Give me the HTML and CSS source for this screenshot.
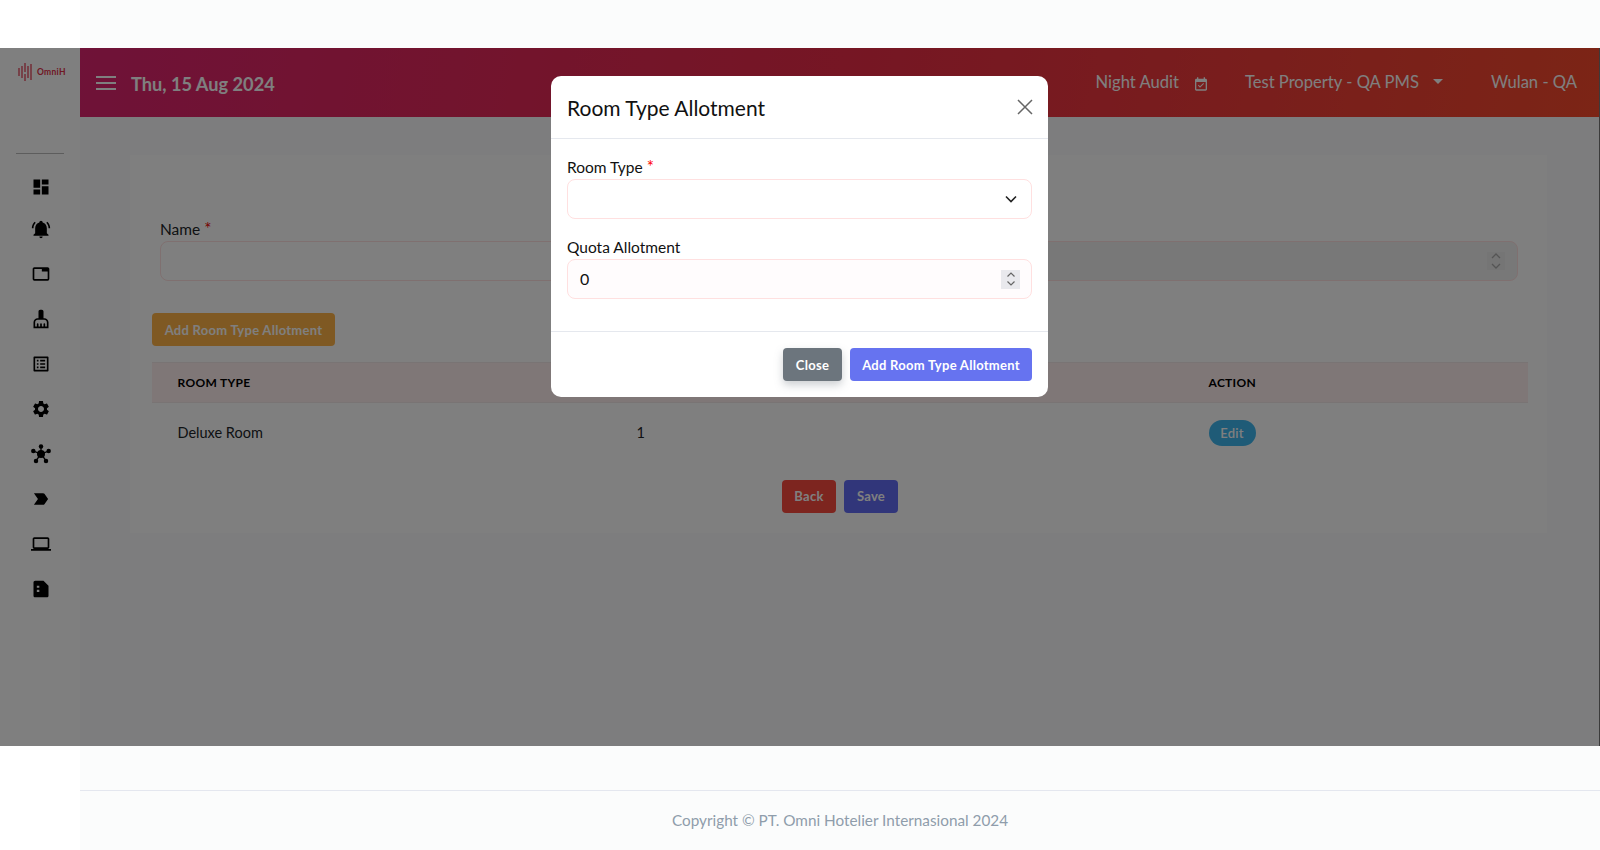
FILE: index.html
```html
<!DOCTYPE html>
<html lang="en">
<head>
  <meta charset="UTF-8" />
  <meta name="viewport" content="width=device-width, initial-scale=1.0" />
  <title>Room Type Allotment</title>
  <link rel="stylesheet" href="styles.css">
</head>
<body>
  <div class="top-strip"></div>

  <div class="stage">
    <aside class="sidebar">
      <div class="logo">
        <svg class="logo-mark" viewBox="0 0 16 18" width="16" height="18">
          <path d="M1 5v8M4 3v12M7 0v9M7 11v7M10 3v12M13 1v16" />
        </svg>
        <span class="logo-text">OmniH</span>
      </div>
      <div class="side-divider"></div>
      <nav class="side-nav">
        <a href="#"><svg viewBox="0 0 24 24"><path d="M13 3v6h8V3M13 21h8V11h-8M3 21h8v-6H3M3 13h8V3H3v10z" /></svg></a>
        <a href="#"><svg viewBox="0 0 24 24"><path d="M21 19v1H3v-1l2-2v-6c0-3.100 2.030-5.830 5-6.710V4a2 2 0 0 1 4 0v.29c2.970.88 5 3.610 5 6.710v6l2 2M14 21a2 2 0 0 1-4 0M19.750 3.190l-1.420 1.420C20.040 6.300 21 8.600 21 11h2c0-2.930-1.160-5.750-3.250-7.810M1 11h2c0-2.400.96-4.700 2.670-6.390L4.250 3.190C2.160 5.250 1 8.070 1 11z" /></svg></a>
        <a href="#"><svg viewBox="0 0 24 24"><path d="M20 18H4V6h9v3h7M20 4H4C2.900 4 2 4.900 2 6v12a2 2 0 0 0 2 2h16a2 2 0 0 0 2-2V6c0-1.100-.9-2-2-2z" /></svg></a>
        <a href="#"><svg viewBox="0 0 24 24"><path d="M16 11h-1V3c0-1.100-.9-2-2-2h-2c-1.100 0-2 .9-2 2v8H8c-2.760 0-5 2.240-5 5v7h18v-7c0-2.760-2.240-5-5-5zm3 10h-2v-3c0-.55-.45-1-1-1s-1 .45-1 1v3h-2v-3c0-.55-.45-1-1-1s-1 .45-1 1v3H9v-3c0-.55-.45-1-1-1s-1 .45-1 1v3H5v-5c0-1.650 1.350-3 3-3h8c1.650 0 3 1.350 3 3v5z" /></svg></a>
        <a href="#"><svg viewBox="0 0 24 24"><path d="M19 5v14H5V5h14m1.100-2H3.900c-.5 0-.9.4-.9.9v16.200c0 .4.4.9.9.9h16.200c.4 0 .9-.5.9-.9V3.900c0-.5-.5-.9-.9-.9zM11 7h6v2h-6V7zm0 4h6v2h-6v-2zm0 4h6v2h-6zM7 7h2v2H7zm0 4h2v2H7zm0 4h2v2H7z" /></svg></a>
        <a href="#"><svg viewBox="0 0 24 24"><path d="M19.140 12.940c.04-.3.06-.61.06-.94 0-.32-.02-.64-.07-.94l2.030-1.580c.18-.14.23-.41.12-.61l-1.920-3.320c-.12-.22-.37-.29-.59-.22l-2.390.96c-.5-.38-1.030-.7-1.620-.94l-.36-2.540c-.04-.24-.24-.41-.48-.41h-3.840c-.24 0-.43.17-.47.41l-.36 2.540c-.59.24-1.130.57-1.620.94l-2.390-.96c-.22-.08-.47 0-.59.22L2.740 8.870c-.12.21-.08.47.12.61l2.030 1.580c-.05.3-.09.63-.09.94s.02.64.07.94l-2.030 1.580c-.18.14-.23.41-.12.61l1.920 3.320c.12.22.37.29.59.22l2.390-.96c.5.38 1.030.7 1.620.94l.36 2.540c.05.24.24.41.48.41h3.840c.24 0 .44-.17.47-.41l.36-2.540c.59-.24 1.130-.56 1.620-.94l2.390.96c.22.08.47 0 .59-.22l1.920-3.320c.12-.22.07-.47-.12-.61l-2.010-1.580zM12 15.600c-1.980 0-3.600-1.620-3.600-3.600s1.620-3.600 3.600-3.600 3.600 1.620 3.600 3.600-1.620 3.600-3.600 3.600z" /></svg></a>
        <a href="#">
          <svg viewBox="0 0 24 24">
            <path d="M12 12V3M12 12L3 8.500M12 12l9-3.500M12 12l-6 8M12 12l6 8" class="hub-line" />
            <circle cx="12" cy="12" r="4.800" />
            <circle cx="12" cy="3" r="2.700" />
            <circle cx="2.800" cy="8.500" r="2.700" />
            <circle cx="21.200" cy="8.500" r="2.700" />
            <circle cx="6" cy="20.500" r="2.700" />
            <circle cx="18" cy="20.500" r="2.700" />
          </svg>
        </a>
        <a href="#"><svg viewBox="0 0 24 24"><path d="M3.500 18.990l11 .01c.67 0 1.270-.33 1.630-.84L20.500 12l-4.370-6.160c-.36-.51-.96-.84-1.630-.84l-11 .01L8.340 12 3.500 18.990z" /></svg></a>
        <a href="#"><svg viewBox="0 0 24 24"><path d="M20 18c1.100 0 2-.9 2-2V6c0-1.110-.9-2-2-2H4c-1.110 0-2 .89-2 2v10a2 2 0 0 0 2 2H0v2h24v-2h-4M4 6h16v10H4V6z" /></svg></a>
        <a href="#"><svg viewBox="0 0 24 24"><path fill-rule="evenodd" d="M15 2H5C3.900 2 3 2.900 3 4v16c0 1.100.9 2 2 2h14c1.100 0 2-.9 2-2V8l-6-6zM7 8h3v2.500H7zM7 13h3v2.500H7z" /></svg></a>
      </nav>
    </aside>

    <div class="main">
      <header class="topbar">
        <div class="topbar-left">
          <svg class="burger" viewBox="0 0 20 14" width="20" height="14"><path d="M0 1h20M0 7h20M0 13h20" /></svg>
          <span class="date">Thu, 15 Aug 2024</span>
        </div>
        <div class="topbar-right">
          <span class="audit">Night Audit</span>
          <svg class="cal" viewBox="0 0 24 24" width="16" height="16"><path d="M19 4h-1V2h-2v2H8V2H6v2H5c-1.100 0-2 .9-2 2v14c0 1.100.9 2 2 2h14c1.100 0 2-.9 2-2V6c0-1.100-.9-2-2-2zm0 16H5V9h14v11zm-2.500-8.500l-1.100-1.100-4.900 4.900-2-2-1.100 1.100 3.100 3.100 6-6z" /></svg>
          <span class="property">Test Property - QA PMS</span>
          <span class="caret"></span>
          <span class="user">Wulan - QA</span>
        </div>
      </header>

      <section class="card">
        <div class="form-row">
          <div class="form-group">
            <label>Name <span class="req">*</span></label>
            <div class="field"></div>
          </div>
          <div class="form-group">
            <label>Quota</label>
            <div class="field field-muted">
              <span class="spin-box">
                <svg class="spin" viewBox="0 0 12 20" width="12" height="20"><path d="M2 7l4-4 4 4M2 13l4 4 4-4" /></svg>
              </span>
            </div>
          </div>
        </div>

        <button class="btn btn-orange">Add Room Type Allotment</button>

        <table class="rooms">
          <thead>
            <tr><th class="col-a">Room Type</th><th class="col-b">Quota Allotment</th><th>Action</th></tr>
          </thead>
          <tbody>
            <tr><td>Deluxe Room</td><td>1</td><td><button class="btn btn-pill">Edit</button></td></tr>
          </tbody>
        </table>

        <div class="form-actions">
          <button class="btn btn-red">Back</button>
          <button class="btn btn-navy">Save</button>
        </div>
      </section>
    </div>

    <div class="backdrop">
      <div class="modal">
        <div class="modal-head">
          <h3>Room Type Allotment</h3>
          <svg class="modal-x" viewBox="0 0 16 16" width="16" height="16"><path d="M1 1l14 14M15 1L1 15" /></svg>
        </div>
        <div class="modal-body">
          <label>Room Type <span class="req req-bright">*</span></label>
          <div class="field field-white">
            <span class="grow"></span>
            <svg class="chev" viewBox="0 0 12 8" width="12" height="8"><path d="M1 1.500l5 5 5-5" /></svg>
          </div>
          <label class="second">Quota Allotment</label>
          <div class="field field-pink">
            <span class="grow value">0</span>
            <span class="stepper">
              <svg viewBox="0 0 12 18" width="12" height="18"><path d="M2.500 6.500L6 3l3.500 3.500M2.500 11.500L6 15l3.500-3.500" /></svg>
            </span>
          </div>
        </div>
        <div class="modal-foot">
          <button class="btn btn-grey">Close</button>
          <button class="btn btn-blue">Add Room Type Allotment</button>
        </div>
      </div>
    </div>
  </div>

  <div class="below">
    <div class="below-gap"></div>
    <footer>Copyright © PT. Omni Hotelier Internasional 2024</footer>
  </div>
</body>
</html>
```

FILE: styles.css
```css
* {
  box-sizing: border-box;
}

body {
  font-family: 'Lato', 'Open Sans', sans-serif;
  margin: 0;
  height: 850px;
  overflow: hidden;
  background: #fff;
  color: #212529;
}

.top-strip {
  height: 48px;
  margin-left: 80px;
  background: #fbfcfc;
}

.stage {
  position: relative;
  display: flex;
  height: 698px;
  overflow: hidden;
}

/* sidebar */
.sidebar {
  width: 80px;
  flex-shrink: 0;
  background: #fff;
}

.logo {
  height: 105px;
  padding: 15px 0 0 18px;
  display: flex;
  align-items: flex-start;
  gap: 3px;
}

.logo-mark {
  fill: none;
  stroke: #e03048;
  stroke-width: 1.2;
}

.logo-text {
  font-size: 8.500px;
  font-weight: 700;
  line-height: 18px;
  letter-spacing: 0.3px;
  color: #e03048;
}

.side-divider {
  height: 1px;
  margin: 0 16px;
  background: #bbb;
}

.side-nav {
  display: flex;
  flex-direction: column;
  align-items: center;
  padding: 13px 0 0 2px;
}

.side-nav a {
  display: flex;
  align-items: center;
  justify-content: center;
  height: 45px;
}

.side-nav a:first-child {
  height: 39px;
}

.side-nav svg {
  width: 20px;
  height: 20px;
  fill: #000;
}

.hub-line {
  stroke: #000;
  stroke-width: 1.6;
}

/* header */
.main {
  flex: 1;
  min-width: 0;
  background: #fafbfc;
  border-right: 1px solid #777;
}

.topbar {
  height: 69px;
  display: flex;
  align-items: center;
  justify-content: space-between;
  padding: 0 22px 0 16px;
  color: #fff;
  background: linear-gradient(100deg, #de2470 0%, #ec2c48 50%, #f84a2c 100%);
}

.topbar-left {
  display: flex;
  align-items: center;
  gap: 15px;
}

.burger {
  fill: none;
  stroke: #fff;
  stroke-width: 2;
}

.date {
  font-size: 18.200px;
  font-weight: 700;
  padding-top: 2px;
}

.topbar-right {
  display: flex;
  align-items: center;
  font-size: 16.600px;
  padding-bottom: 2px;
}

.cal {
  fill: #fff;
  margin: 4px 0 0 14px;
}

.property {
  margin-left: 36px;
}

.caret {
  width: 0;
  height: 0;
  margin: 0 0 0 14px;
  border-left: 5px solid transparent;
  border-right: 5px solid transparent;
  border-top: 5px solid #fff;
}

.user {
  margin-left: 48px;
}

/* page behind the dialog */
.card {
  margin: 38px 52px 0 50px;
  height: 378px;
  padding: 64px 19px 0 22px;
  background: #fff;
}

.form-row {
  display: flex;
  gap: 24px;
  padding: 0 10px 0 8px;
}

.form-group {
  flex: 1;
}

label {
  display: block;
  font-size: 15.500px;
  line-height: 20px;
  margin-bottom: 2px;
}

.req {
  color: #e00;
  font-size: 17px;
  line-height: 1;
}

.req-bright {
  color: #f00;
}

.field {
  display: flex;
  align-items: center;
  justify-content: flex-end;
  height: 40px;
  padding: 0 12px;
  border: 1px solid #ffe0e0;
  border-radius: 8px;
}

.field-muted {
  background: #f1f1f1;
  padding-right: 12px;
}

.spin-box {
  display: flex;
  align-items: center;
  justify-content: center;
  width: 18px;
  height: 18px;
  background: #eaeaea;
}

.spin {
  fill: none;
  stroke: #aaa;
  stroke-width: 1.3;
}

.btn {
  display: block;
  border: none;
  height: 33px;
  padding: 0;
  border-radius: 4px;
  font-family: inherit;
  font-size: 13px;
  font-weight: 700;
  letter-spacing: 0.27px;
  color: #fff;
}

.btn-orange {
  width: 183px;
  margin-top: 32px;
  background: #ffb347;
}

.rooms {
  width: 1376px;
  margin-top: 16px;
  border-collapse: collapse;
  table-layout: fixed;
}

.rooms th {
  height: 40px;
  padding: 0 25.500px;
  text-align: left;
  font-size: 12px;
  text-transform: uppercase;
  letter-spacing: 0.3px;
  color: #000;
  background: #ffeeee;
  border: 0 solid #f3e8e8;
  border-width: 1px 0 1px;
}

.rooms .col-a {
  width: 459px;
}

.rooms .col-b {
  width: 572px;
}

.rooms td {
  height: 60px;
  padding: 0 25.500px;
  font-size: 14.500px;
}

.btn-pill {
  height: 26px;
  width: 47px;
  border-radius: 13px;
  font-weight: 600;
  background: #3fb6ee;
}

.form-actions {
  display: flex;
  justify-content: center;
  gap: 8px;
  margin-top: 17px;
}

.btn-red {
  width: 54px;
  background: #fb4a3f;
}

.btn-navy {
  width: 54px;
  background: #636cf5;
}

/* dialog */
.backdrop {
  position: absolute;
  inset: 0;
  display: flex;
  justify-content: center;
  align-items: flex-start;
  padding: 28px 1px 0 0;
  background: rgba(0, 0, 0, 0.5);
}

.modal {
  width: 497px;
  height: 321px;
  background: #fff;
  border-radius: 10px;
  display: flex;
  flex-direction: column;
  color: #111;
}

.modal-head {
  display: flex;
  align-items: center;
  justify-content: space-between;
  height: 63px;
  padding: 0 15px 0 16px;
  border-bottom: 1px solid #e5e8ee;
}

.modal-head h3 {
  margin: 0;
  font-size: 21px;
  font-weight: 400;
}

.modal-x {
  fill: none;
  stroke: #666;
  stroke-width: 1.5;
}

.modal-body {
  flex: 1;
  padding: 18px 16px 0;
}

.modal-body label {
  margin-bottom: 2px;
}

.modal-body .second {
  margin-top: 18px;
}

.field-white {
  background: #fff;
}

.field-pink {
  background: #fffcfd;
  padding-right: 11px;
}

.grow {
  flex: 1;
}

.value {
  font-size: 16px;
  padding-bottom: 2px;
}

.chev {
  fill: none;
  stroke: #222;
  stroke-width: 1.6;
  margin-right: 2px;
}

.stepper {
  display: flex;
  align-items: center;
  justify-content: center;
  width: 19px;
  height: 19px;
  background: #e9e9ed;
}

.stepper svg {
  fill: none;
  stroke: #666;
  stroke-width: 1.2;
}

.modal-foot {
  display: flex;
  justify-content: flex-end;
  gap: 8px;
  height: 66px;
  padding: 16px 16px 0;
  border-top: 1px solid #e5e8ee;
}

.btn-grey {
  width: 59px;
  background: #6c757d;
  box-shadow: 0 4px 8px rgba(108, 117, 125, 0.35);
}

.btn-blue {
  width: 182px;
  background: #6673f0;
}

/* below the stage */
.below {
  margin-left: 80px;
  height: 104px;
  background: #fbfcfc;
}

.below-gap {
  height: 45px;
  border-bottom: 1px solid #e4e7ef;
}

footer {
  height: 59px;
  display: flex;
  align-items: center;
  justify-content: center;
  padding-bottom: 2px;
  font-size: 15.300px;
  color: #8f9dab;
}
```
